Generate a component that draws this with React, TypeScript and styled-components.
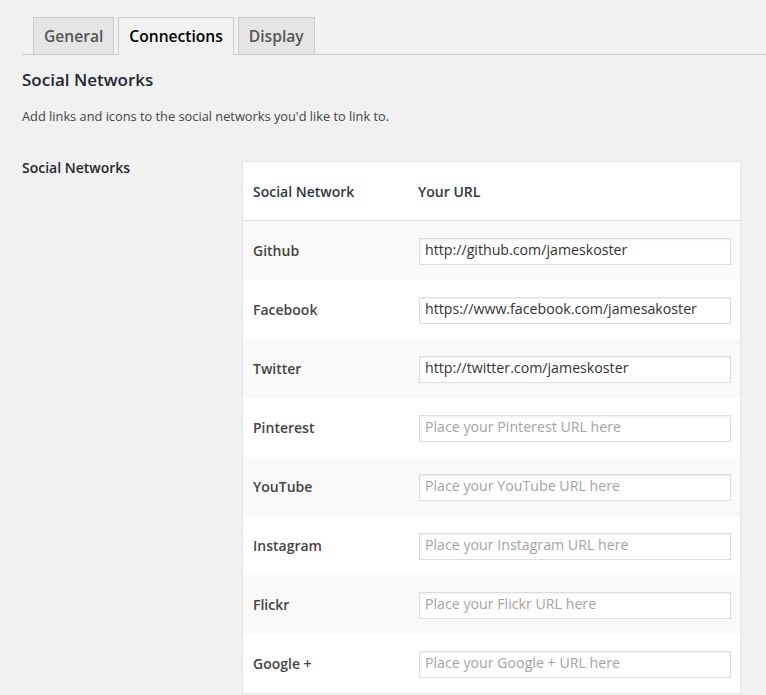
import React from "react";
import styled, { createGlobalStyle } from "styled-components";

const Global = createGlobalStyle`
  html, body { margin: 0; padding: 0; background: #f1f1f1; }
  body { font-family: "Open Sans", "Noto Sans", sans-serif; color: #444; font-size: 13px; }
  * { box-sizing: border-box; }
`;

const Page = styled.div`
  padding: 17px 0 0 22px;
  min-height: 695px;
  overflow: hidden;
`;

const TabBar = styled.nav`
  display: flex;
  align-items: flex-end;
  gap: 4px;
  padding-left: 11px;
  border-bottom: 1px solid #ccc;
  height: 38px;
`;

const Tab = styled.a<{ $active?: boolean }>`
  display: flex;
  align-items: center;
  height: 38px;
  padding: 0 10px 1px;
  margin-bottom: -1px;
  font-size: 15.6px;
  font-weight: 600;
  text-decoration: none;
  color: ${(p) => (p.$active ? "#000" : "#555")};
  background: ${(p) => (p.$active ? "#f1f1f1" : "#e5e5e5")};
  border: 1px solid #ccc;
  border-bottom-color: ${(p) => (p.$active ? "#f1f1f1" : "#ccc")};
`;

const Title = styled.h2`
  margin: 13px 0 0;
  font-size: 17px;
  line-height: 24px;
  font-weight: 600;
  color: #23282d;
`;

const Description = styled.p`
  margin: 12px 0 0;
  font-size: 12.8px;
  line-height: 24px;
  color: #444;
`;

const FormRow = styled.div`
  display: grid;
  grid-template-columns: 220px 499px;
  margin-top: 33px;
`;

const FieldLabel = styled.div`
  font-size: 14px;
  font-weight: 600;
  color: #23282d;
  line-height: 20px;
  margin-top: -3px;
`;

const Table = styled.div`
  background: #fff;
  border: 1px solid #e5e5e5;
  border-bottom: none;
  box-shadow: 0 1px 1px rgba(0, 0, 0, 0.04);
`;

const HeadRow = styled.div`
  display: grid;
  grid-template-columns: 165px 1fr;
  align-items: center;
  height: 59px;
  border-bottom: 1px solid #e1e1e1;
  padding: 0 10px;
  font-size: 14px;
  font-weight: 600;
  color: #32373c;
`;

const Row = styled.div<{ $alt?: boolean }>`
  display: grid;
  grid-template-columns: 166px 1fr;
  align-items: center;
  height: 59px;
  padding: 1px 9px 0 10px;
  background: ${(p) => (p.$alt ? "#f9f9f9" : "#fff")};
`;

const RowLabel = styled.div`
  font-size: 14px;
  font-weight: 600;
  color: #444;
  margin-top: -2px;
`;

const UrlInput = styled.input`
  width: 312px;
  height: 27px;
  padding: 0 5px 3px 5px;
  border: 1px solid #ddd;
  box-shadow: inset 0 1px 2px rgba(0, 0, 0, 0.07);
  background: #fff;
  font-family: "Open Sans", "Noto Sans", sans-serif;
  font-size: 14.2px;
  color: #333;
  outline: none;
  &::placeholder { color: #a3a3a3; }
`;

const networks: { name: string; value?: string }[] = [
  { name: "Github", value: "http://github.com/jameskoster" },
  { name: "Facebook", value: "https://www.facebook.com/jamesakoster" },
  { name: "Twitter", value: "http://twitter.com/jameskoster" },
  { name: "Pinterest" },
  { name: "YouTube" },
  { name: "Instagram" },
  { name: "Flickr" },
  { name: "Google +" },
];

export default function App() {
  return (
    <Page>
      <Global />
      <TabBar>
        <Tab>General</Tab>
        <Tab $active>Connections</Tab>
        <Tab>Display</Tab>
      </TabBar>
      <Title>Social Networks</Title>
      <Description>Add links and icons to the social networks you'd like to link to.</Description>
      <FormRow>
        <FieldLabel>Social Networks</FieldLabel>
        <Table>
          <HeadRow>
            <span>Social Network</span>
            <span>Your URL</span>
          </HeadRow>
          {networks.map((n, i) => (
            <Row key={n.name} $alt={i % 2 === 0}>
              <RowLabel>{n.name}</RowLabel>
              <UrlInput
                type="text"
                defaultValue={n.value}
                placeholder={`Place your ${n.name} URL here`}
              />
            </Row>
          ))}
        </Table>
      </FormRow>
    </Page>
  );
}
